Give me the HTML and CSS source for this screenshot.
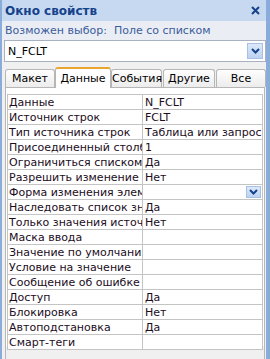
FILE: index.html
```html
<!DOCTYPE html>
<html lang="ru">
<head>
	<meta charset="UTF-8">
	<title>Окно свойств</title>
	<link rel="stylesheet" href="styles.css">
</head>
<body>
	<div id="sheet">
		<div class="caption">
			<span>Окно свойств</span>
			<svg class="close" width="9" height="9" viewBox="0 0 9 9"><path d="M1 1L8 8M8 1L1 8" stroke="#15428b" stroke-width="2"/></svg>
		</div>
		<div class="hint">Возможен выбор:&nbsp; Поле со списком</div>
		<div class="combo">
			<span>N_FCLT</span>
			<div class="drop"><svg width="9" height="6" viewBox="0 0 9 6"><path d="M1 1L4.5 4.5L8 1" fill="none" stroke="#15428b" stroke-width="2"/></svg></div>
		</div>
		<div class="tabs">
			<div class="tab t1">Макет</div>
			<div class="tab t2 active">Данные</div>
			<div class="tab t3">События</div>
			<div class="tab t4">Другие</div>
			<div class="tab t5">Все</div>
		</div>
		<div class="page">
			<table class="grid">
				<tr><td class="name">Данные</td><td>N_FCLT</td></tr>
				<tr><td class="name">Источник строк</td><td>FCLT</td></tr>
				<tr><td class="name">Тип источника строк</td><td>Таблица или запрос</td></tr>
				<tr><td class="name">Присоединенный столбец</td><td>1</td></tr>
				<tr><td class="name">Ограничиться списком</td><td>Да</td></tr>
				<tr><td class="name">Разрешить изменение списка</td><td>Нет</td></tr>
				<tr><td class="name">Форма изменения элементов списка</td><td class="sel"><div class="cell-drop"><svg width="9" height="6" viewBox="0 0 9 6"><path d="M1 1L4.5 4.5L8 1" fill="none" stroke="#15428b" stroke-width="2"/></svg></div></td></tr>
				<tr><td class="name">Наследовать список значений</td><td>Да</td></tr>
				<tr><td class="name">Только значения источника строк</td><td>Нет</td></tr>
				<tr><td class="name">Маска ввода</td><td></td></tr>
				<tr><td class="name">Значение по умолчанию</td><td></td></tr>
				<tr><td class="name">Условие на значение</td><td></td></tr>
				<tr><td class="name">Сообщение об ошибке</td><td></td></tr>
				<tr><td class="name">Доступ</td><td>Да</td></tr>
				<tr><td class="name">Блокировка</td><td>Нет</td></tr>
				<tr><td class="name">Автоподстановка</td><td>Да</td></tr>
				<tr><td class="name">Смарт-теги</td><td></td></tr>
			</table>
		</div>
	</div>
</body>
</html>
```

FILE: styles.css
```css
*{
	margin:0;
	padding:0;
	box-sizing: border-box;
}
body{
	width: 270px;
	height: 359px;
	overflow: hidden;
	font-family: "DejaVu Sans", sans-serif;
	font-size: 11px;
}
#sheet{
	height: 359px;
	background-color: #f0f0f0;
	border-left: 2px solid #8aacdb;
	border-right: 4px solid #8aacdb;
	display: flex;
	flex-direction: column;
}
.caption{
	height: 21px;
	background-color: #c7d9f1;
	color: #15428b;
	font-weight: bold;
	font-size: 12px;
	padding: 0 6px 0 3px;
	display: flex;
	align-items: center;
	justify-content: space-between;
}
.hint{
	height: 19px;
	padding-left: 3px;
	color: #3b5c9c;
	background-color: #eaeef4;
	line-height: 19px;
}
.combo{
	height: 22px;
	margin: 0 0 0 2px;
	background-color: #fff;
	border: 1px solid #a7b1c0;
	display: flex;
	align-items: center;
	justify-content: space-between;
	padding: 0 2px 0 3px;
	color: #000;
}
.drop{
	width: 16px;
	height: 16px;
	background: linear-gradient(#dde9fa, #bcd2f2);
	border: 1px solid #a8c0e6;
	display: flex;
	align-items: center;
	justify-content: center;
}
.tabs{
	display: flex;
	align-items: flex-end;
	height: 25px;
	padding-left: 3px;
	background-color: #f0f0f0;
}
.tab{
	height: 18px;
	border: 1px solid #b6b6b6;
	border-bottom: none;
	border-radius: 3px 3px 0 0;
	background: linear-gradient(#fefefe, #ececec);
	text-align: center;
	line-height: 17px;
	color: #000;
}
.t1{ width: 50px; }
.t2{ width: 56px; }
.t3{ width: 51px; }
.t4{ width: 52px; margin-left: 1px; }
.t5{ width: 50px; margin-left: 1px; }
.tab.active{
	height: 21px;
	background: #fff;
	border-top: 2px solid #eaa52f;
	line-height: 19px;
	position: relative;
	top: 1px;
}
.page{
	margin: 0 0 0 3px;
	width: 260px;
	border: 1px solid #b6b6b6;
	background-color: #fff;
	padding: 6px 1px 0;
	flex: 1;
	border-bottom: none;
	background: linear-gradient(#fff, #fff 258px, #f0f0f0 258px);
}
.grid{
	border-collapse: collapse;
	width: 256px;
	table-layout: fixed;
	background-color: #fff;
}
.grid td{
	height: 15px;
	border: 1px solid #c4c4c4;
	padding: 0 2px;
	white-space: nowrap;
	overflow: hidden;
	line-height: 13px;
	color: #1c0c1c;
}
.grid td.name{
	width: 135px;
	padding-left: 1px;
}
.grid td.sel{
	padding: 0 1px 0 0;
}
.cell-drop{
	width: 15px;
	height: 12px;
	margin-left: auto;
	background: linear-gradient(#dde9fa, #bcd2f2);
	border: 1px solid #a8c0e6;
	display: flex;
	align-items: center;
	justify-content: center;
}
```
